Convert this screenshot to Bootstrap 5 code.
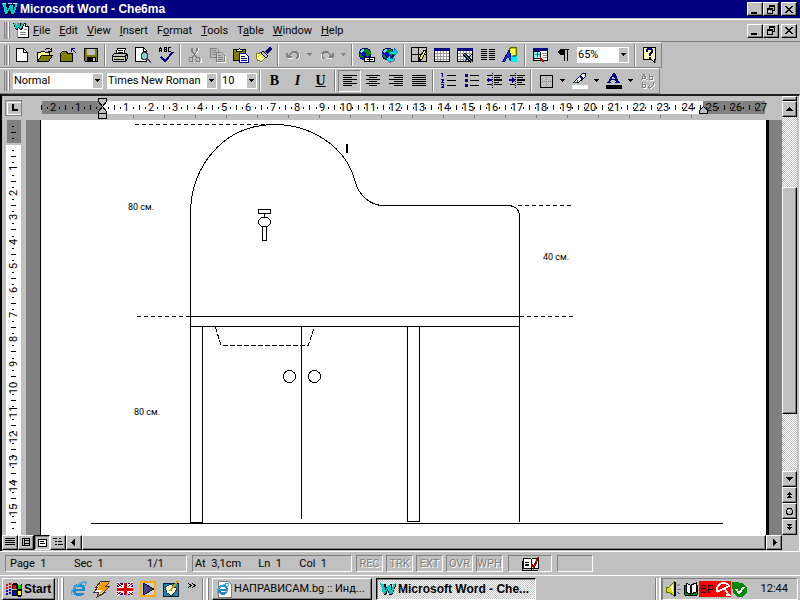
<!DOCTYPE html>
<html lang="en">
<head>
<meta charset="utf-8">
<meta name="viewport" content="width=device-width, initial-scale=1">
<title>Microsoft Word - Che6ma</title>
<link href="https://cdn.jsdelivr.net/npm/bootstrap@5.3.0/dist/css/bootstrap.min.css" rel="stylesheet">
<style>
:root{--face:#c0c0c0;--shade:#808080;--navy:#000080}
body{background:var(--face);color:#000;font:11px/14px Roboto,"Liberation Sans",sans-serif;overflow-x:hidden}
button{font:inherit;color:#000;border-radius:0}
svg{display:block;flex:none;shape-rendering:crispEdges}
.bold-ui,.task.bold-ui{font:bold 12px/16px "Liberation Sans",Arial,sans-serif}
.titlebar{background:var(--navy);color:#fff;height:18px;padding:0 3px 0 2px;margin-bottom:1px}
.titlebar h1{padding-left:2px}
.raised{background:var(--face);border:1px solid;border-color:#fff #000 #000 #fff;box-shadow:inset -1px -1px var(--shade);padding:0}
.sunken{border:1px solid;border-color:var(--shade) #fff #fff var(--shade)}
.dither{background:repeating-conic-gradient(#fff 0 25%,#c0c0c0 0 50%) 0 0/2px 2px}
.win-btn{width:16px;height:14px;display:flex;align-items:center;justify-content:center}
.win-btn.restore{margin-right:2px}
.band{border-top:1px solid #fff;border-bottom:1px solid var(--shade);border-right:1px solid var(--shade);padding-left:4px}
.menu-band{height:23px;padding-right:3px;border-right:0}
.tool-band{height:26px;width:fit-content}
.grip{width:6px;align-self:stretch;margin:2px 0;border:solid;border-width:0 1px;border-color:#fff var(--shade);background:linear-gradient(90deg,#c0c0c0 0 1px,#808080 1px 2px,#c0c0c0 2px 3px,#fff 3px 4px)}
.doc-icon{margin-left:3px}
.menu-item{border:0;background:none;padding:0 5px 0 4px;line-height:16px}
.tool{width:23px;height:22px;border:1px solid transparent;background:none;padding:0;display:flex;align-items:center;justify-content:center}
.tool.pressed{border-color:var(--shade) #fff #fff var(--shade)}
.drop{width:11px;height:22px;border:0;background:none;padding:0;display:flex;align-items:center;justify-content:center}
.divide{width:6px;align-self:stretch;margin:1px 0;background:linear-gradient(90deg,transparent 0 2px,#808080 2px 3px,#fff 3px 4px,transparent 4px)}
.combos{margin-left:3px}
.zoom-box{margin:0 3px}
.combo{background:#fff;border:1px solid #fff;height:16px}
.combo select{appearance:none;border:0;background:#fff;color:#000;font:inherit;padding:0;min-width:0;flex:1;line-height:14px;border-radius:0}
.combo-arrow{width:9px;background:var(--face);pointer-events:none;display:flex;align-items:center;justify-content:center}
.w90{width:90px}.w110{width:110px}.w36{width:36px}.w52{width:52px}.w44{width:44px}
.glyph{font:bold 14px/16px "Liberation Serif",serif}
.workspace{border-top:2px solid #000;border-top-color:#202020;border-left:2px solid #000;border-right:1px solid #fff;padding-right:2px}
.h-ruler{height:24px;overflow:hidden}
.doc-area{background:var(--shade);padding:0 13px 0 14px;min-width:0}
.sheet{background:#fff;border-left:1px solid #000;border-right:3px solid #000;overflow:hidden;width:100%}
.v-ruler{width:24px;overflow:hidden}
.v-scroll{width:15px}
.v-scroll .raised,.h-scroll .raised{display:flex;align-items:center;justify-content:center}
.v-scroll .step{height:16px;width:15px;flex:none}
.split-box{height:5px;flex:none}
.v-thumb{flex:227}
.space-above{flex:70}.space-below{flex:57}
.h-scroll{height:16px}
.view-btn{width:16px;height:15px}
.view-btn.active{border-color:#000 #fff #fff #000;box-shadow:inset 1px 1px var(--shade)}
.h-thumb{height:15px}
.status{height:24px;border-top:1px solid #fff;padding:3px 5px}
.status .sunken{height:17px;line-height:15px;white-space:nowrap}
.pane-a{width:182px;padding:0 22px 0 4px}.pane-b{width:160px;padding:0 24px 0 2px}
.pane-gap{margin-left:5px}
.modes{gap:3px;margin-left:4px}
.mode{width:27px;color:var(--shade);text-shadow:1px 1px #fff;text-align:center}
.taskbar{border-top:1px solid #fff;height:27px;padding:2px}
.start{width:53px;height:22px;padding:0 2px;gap:1px}
.quick{width:23px;height:22px;border:0;background:none;padding:0;display:flex;align-items:center;justify-content:center}
.quick.more{width:18px}
.task{width:160px;height:22px;padding:0 3px;gap:2px;text-align:left;white-space:nowrap;overflow:hidden}
.task.current{border-color:#000 #fff #fff #000;box-shadow:inset 1px 1px var(--shade)}
.tray{width:136px;height:22px;padding:0 9px 0 2px}
.bar-grip{width:7px;height:22px;margin:0 3px 0 2px;background:linear-gradient(90deg,#808080 0 1px,#fff 1px 2px,transparent 2px 4px,#fff 4px 6px,#808080 6px)}
.tick-label{font:11px Roboto,"Liberation Sans",sans-serif;text-anchor:middle}
.dim-label{font:9px Roboto,"Liberation Sans",sans-serif}
</style>
<script src="https://cdn.jsdelivr.net/npm/bootstrap@5.3.0/dist/js/bootstrap.bundle.min.js"></script>
</head>
<body class="d-flex flex-column min-vh-100">

<svg width="0" height="0" class="position-absolute" aria-hidden="true">
<symbol id="word" viewBox="0 0 16 14"><path d="M1 2h5l1 5 3-5h2v5l2-5V1h2v3l-4 9H9L8 8l-2 5H4L2 4H1z" fill="#000"/><path d="M0 1h4l1 8 3-6h3v6l3-8h2l-4 11H9L8 6l-3 6H3L1 3H0z" fill="#0cc"/><path d="M1 1h3M6 1h4M11 1h4" stroke="#aff"/></symbol>
<symbol id="min" viewBox="0 0 10 9"><path d="M1 7h6v2H1z"/></symbol>
<symbol id="restore" viewBox="0 0 10 9"><path d="M3 0h6v6H7V5h1V2H4v1H3zM1 3h6v6H1zm1 2v3h4V5z" fill-rule="evenodd"/></symbol>
<symbol id="close" viewBox="0 0 10 9"><path d="M1 1h2v1h1v1h2V2h1V1h2v1H8v1H7v1H6v1h1v1h1v1h1v1H7V7H6V6H4v1H3v1H1V7h1V6h1V5h1V4H3V3H2V2H1z"/></symbol>
<symbol id="down" viewBox="0 0 7 4"><path d="M1 0h5v1H5v1H4v1H3V2H2V1H1z"/></symbol>
<symbol id="doc" viewBox="0 0 16 17"><path d="M4.500 1.500h8l3 3v11h-11z" fill="#fff" stroke="#808080"/><path d="M15.500 4v11.500H5M12.500 1v3.500h3" stroke="#000" fill="none"/><path d="M7 10.500h6M7 12.500h6M11 7.500h3" stroke="#808080"/><path d="M0 1h3l1 4 2-4h2v4l2-4h2L9 8H7L6 5 5 8H3z" fill="#000"/><path d="M0 1h3l1 3 2-3h1v4l2-4h2L8 7H7L6 4 4 7H3L1 2z" fill="#0cc"/></symbol>
<symbol id="new" viewBox="0 0 18 16"><path d="M3.500 1.500h7l4 4v9h-11z" fill="#fff" stroke="#000"/><path d="M10.500 1.500v4h4" fill="none" stroke="#000"/></symbol>
<symbol id="open" viewBox="0 0 18 16"><path d="M1.500 14V5.500h3l1-1h3l1 1h4v3" fill="#ff8" stroke="#000"/><path d="M1.500 14.500l4-6h11l-4 6z" fill="#808000" stroke="#000"/><path d="M9 3q3-3 6 0M15.500 1v3H12" fill="none" stroke="#000"/></symbol>
<symbol id="shut" viewBox="0 0 18 16"><path d="M1.500 14.500V6.500l2-2h4l1 2h5v8z" fill="#808000" stroke="#000"/><path d="M12.500 5V1.500H16M13 2l4 4" fill="none" stroke="#000080"/></symbol>
<symbol id="save" viewBox="0 0 18 16"><path d="M2.500 1.500h13v13h-12l-1-1z" fill="#808000" stroke="#000"/><path d="M5 2h8v6H5z" fill="#c0c0c0"/><path d="M5 10h9v5H5z"/><path d="M11 11h2v3h-2z" fill="#c0c0c0"/></symbol>
<symbol id="print" viewBox="0 0 18 16"><path d="M4.500 7.500l2-6h8l-2 6" fill="#fff" stroke="#000"/><path d="M7 3.500h5M7 5.500h5" stroke="#000"/><path d="M1.500 8.500l2-2h12l1 1v4l-2 3h-12l-1-1z" fill="#c0c0c0" stroke="#000"/><path d="M2 9.500h12M3 12.500h10M14 9l3-2M14 9v5" fill="none" stroke="#000"/><path d="M9 11h2v1H9z" fill="#ff0"/></symbol>
<symbol id="preview" viewBox="0 0 18 16"><path d="M1.500.500h8l3 3v11h-11z" fill="#fff" stroke="#000"/><path d="M9.500 1v3h3" fill="none" stroke="#000"/><circle cx="10.500" cy="9" r="3.500" fill="#8cc" stroke="#404040"/><path d="M13 11.500l4 4" stroke="#446" stroke-width="2"/></symbol>
<symbol id="spell" viewBox="0 0 18 16"><path d="M2.500 5V2l1-1 1 1v3M3 3.500h2M7.500 5V.500h2v4h-2M7 2.500h2M14 .500h-2.500v4H14" fill="none" stroke="#000"/><path d="M4 10l4 4 8-9" fill="none" stroke="#000080" stroke-width="2"/></symbol>
<symbol id="cut" viewBox="0 0 18 16"><path d="M6 1v3l5 7M11 1v3l-5 7" stroke="#808080" fill="none" stroke-width="1.500"/><circle cx="5" cy="12.500" r="2" fill="none" stroke="#808080"/><circle cx="12" cy="12.500" r="2" fill="none" stroke="#808080"/><path d="M12 1v3l-2 3M14 15h1v-3" stroke="#fff" fill="none"/></symbol>
<symbol id="copy" viewBox="0 0 18 16"><path d="M1.500 1.500h6l2 2v7h-8z" fill="#c0c0c0" stroke="#808080"/><path d="M7.500 5.500h5l3 3v6h-8z" fill="#c0c0c0" stroke="#808080"/><path d="M3 3.500h4M3 5.500h4M3 7.500h4M9 8.500h3M9 10.500h5M9 12.500h5" stroke="#808080"/><path d="M16.500 9v6.500H8" stroke="#fff" fill="none"/></symbol>
<symbol id="paste" viewBox="0 0 18 16"><path d="M1.500 2.500h12v11h-12z" fill="#808000" stroke="#000"/><path d="M4.500 4.500v-2h2l1-1 1 1h2v2z" fill="#ff8" stroke="#000"/><path d="M7.500 6.500h6l3 3v6h-9z" fill="#fff" stroke="#000080"/><path d="M9 9.500h4M9 11.500h6M9 13.500h6" stroke="#000080"/></symbol>
<symbol id="painter" viewBox="0 0 18 16"><path d="M1 7l7-2 4 4-6 6-2-2-1 1-1-2z" fill="#ffc" stroke="#808000"/><path d="M3 10l4-3M5 12l4-3" stroke="#dd0"/><path d="M8 4l5 5-2 2-5-5z" fill="#c0c0c0" stroke="#000"/><path d="M11 6l5-5" stroke="#000080" stroke-width="3"/></symbol>
<symbol id="undo" viewBox="0 0 18 16"><path d="M4 10q-2-1-1-4M3.500 6v4h4M4 9l5-4h3l2 2v3l-2 2" fill="none" stroke="#808080" stroke-width="1.500"/><path d="M4 11.500h5M13 13l2-2V7" fill="none" stroke="#fff"/></symbol>
<symbol id="globe" viewBox="0 0 18 16"><circle cx="7" cy="7" r="6.500" fill="#008"/><circle cx="7" cy="7" r="5.500" fill="#00c"/><path d="M5 2h5l3 4-3 4-2-1V6L5 5zM1 7l3 1 2 4-3-1z" fill="#080"/><path d="M2 4l2-2h2v2L3 6z" fill="#8df"/></symbol>
<symbol id="hyper" viewBox="0 0 18 16"><use href="#globe" width="18" height="16"/><path d="M6.500 10.500h5v4h-5zM11.500 10.500h5v4h-5zM9 12.500h6" fill="#fff" stroke="#000"/></symbol>
<symbol id="web" viewBox="0 0 18 16"><use href="#globe" width="18" height="16"/><path d="M8 4h5V1l4 4-4 4V7H8zM13 11H9V8l-4 4 4 4v-2h4z" fill="#0dd" stroke="#046" stroke-width=".5"/></symbol>
<symbol id="borders" viewBox="0 0 18 16"><path d="M1.500.500h15v14h-15zM8.500.500v14M1.500 7.500h15" fill="none" stroke="#000"/><path d="M9 14l1-4 4-7 2 1-4 8z" fill="#ff0" stroke="#000"/></symbol>
<symbol id="grid" viewBox="0 0 18 16"><path d="M1.500 1.500h15v13h-15z" fill="#fff" stroke="#000"/><path d="M1 1h16v3H1z" fill="#000080"/><path d="M2 6.500h14M2 9.500h14M2 12.500h14M4.500 4v10M7.500 4v10M10.500 4v10M13.500 4v10" stroke="#999"/></symbol>
<symbol id="excel" viewBox="0 0 18 16"><use href="#grid" width="18" height="16"/><path d="M8 7l8 8" stroke="#000" stroke-width="3"/><path d="M8 7l8 8" stroke="#0cc"/><path d="M16 7l-8 8" stroke="#008"/></symbol>
<symbol id="columns" viewBox="0 0 18 16"><path d="M2 2.500h6M10 2.500h6M2 4.500h6M10 4.500h6M2 6.500h6M10 6.500h6M2 8.500h6M10 8.500h6M2 10.500h6M10 10.500h6M2 12.500h6M10 12.500h6" stroke="#000"/></symbol>
<symbol id="draw" viewBox="0 0 18 16"><path d="M7.500 1.500l2-1h5v8l-2 1h-5z" fill="#cc0" stroke="#660"/><path d="M8 2h5v6H8z" fill="#ff4"/><path d="M1 14L7 3l3 10H8l-2-4-3 5z" fill="#04c" stroke="#008"/><circle cx="12" cy="12" r="3.500" fill="#0ee"/><path d="M10 10l2-3 2 3z" fill="#08a"/></symbol>
<symbol id="map" viewBox="0 0 18 16"><path d="M2.500 1.500h14v12h-14z" fill="#fff" stroke="#000"/><path d="M2 1h15v3H2z" fill="#000080"/><path d="M11 6.500h5M12 8.500h4M12 10.500h4" stroke="#888"/><circle cx="6" cy="8" r="4" fill="#8ee" stroke="#000"/><path d="M4 7.500h5M6.500 5v5" stroke="#088"/><path d="M9 11l4 4" stroke="#c00" stroke-width="2"/></symbol>
<symbol id="pilcrow" viewBox="0 0 18 16"><path d="M6 2h9v1h-1v11h-1V3h-2v11h-1V8H7L5 7 4 6V4l1-1z"/></symbol>
<symbol id="help" viewBox="0 0 18 16"><path d="M4 13h9v3h2V3h-1" fill="#808080"/><path d="M2.500.500h12v12h-1v3l-3-3h-8z" fill="#ffa" stroke="#000"/><path d="M6 4.500V3l1-1h3l1 1v2L8.500 7v2M7.500 11h2" fill="none" stroke="#000080" stroke-width="2"/></symbol>
<symbol id="al" viewBox="0 0 16 14"><path d="M1 1.500h14M1 3.500h9M1 5.500h14M1 7.500h9M1 9.500h14M1 11.500h9" stroke="#000"/></symbol>
<symbol id="ac" viewBox="0 0 16 14"><path d="M1 1.500h14M4 3.500h8M1 5.500h14M4 7.500h8M1 9.500h14M4 11.500h8" stroke="#000"/></symbol>
<symbol id="ar" viewBox="0 0 16 14"><path d="M1 1.500h14M6 3.500h9M1 5.500h14M6 7.500h9M1 9.500h14M6 11.500h9" stroke="#000"/></symbol>
<symbol id="aj" viewBox="0 0 16 14"><path d="M1 1.500h14M1 3.500h14M1 5.500h14M1 7.500h14M1 9.500h14M1 11.500h14" stroke="#000"/></symbol>
<symbol id="num" viewBox="0 0 16 16"><path d="M7 2.500h9M7 7.500h9M7 12.500h9" stroke="#000"/><path d="M1 .500h1.500V4M1 6.500h2v1L1.500 9.500H4M1 11.500h2.500v3H1M1.500 13h2" fill="none" stroke="#000080"/></symbol>
<symbol id="bul" viewBox="0 0 16 16"><path d="M7 2.500h9M7 7.500h9M7 12.500h9" stroke="#000"/><path d="M2 1h3v3H2zM2 6h3v3H2zM2 11h3v3H2z" fill="#000080"/></symbol>
<symbol id="outd" viewBox="0 0 16 16"><path d="M1 2.500h5M8 2.500h8M8 4.500h6M8 9.500h5M1 11.500h5M8 11.500h8" stroke="#000"/><path d="M8 6h8v2H8z"/><path d="M0 7l3-3v2h3v2H3v2z" fill="#000080"/><path d="M6.500 0v15" stroke="#000" stroke-dasharray="1 1"/></symbol>
<symbol id="ind" viewBox="0 0 16 16"><path d="M1 2.500h5M8 2.500h8M8 4.500h6M8 9.500h5M1 11.500h5M8 11.500h8" stroke="#000"/><path d="M8 6h8v2H8z"/><path d="M6 7L3 4v2H0v2h3v2z" fill="#000080"/><path d="M6.500 0v15" stroke="#000" stroke-dasharray="1 1"/></symbol>
<symbol id="box" viewBox="0 0 16 16"><path d="M2.500 2.500h12v12h-12z" fill="none" stroke="#000"/><path d="M8.500 4v10M4 8.500h10" stroke="#808080" stroke-dasharray="1 1"/></symbol>
<symbol id="hilite" viewBox="0 0 16 16"><path d="M2 9l3-3 6-6h3l-1 4-6 5z" fill="#fff" stroke="#000"/><path d="M8 3l3 3" stroke="#00c" stroke-width="2"/><path d="M2 9h3l1-2" stroke="#066" fill="none"/><path d="M0 12h16v4H0z" fill="#fff"/></symbol>
<symbol id="ink" viewBox="0 0 16 16"><path d="M7 0h2l4 9h1v1H9V9h1L9 7H5L4 9h1v1H1V9h1zM7 3L6 6h3z" fill="#000080" fill-rule="evenodd"/><path d="M0 12h16v4H0z"/></symbol>
<symbol id="turn" viewBox="0 0 16 16"><g fill="none" stroke="#fff" transform="translate(1 1)"><path d="M1.500 7L4 1l2.500 6M2 5h4M9.500 1v5.500h3v-3h-3M2.500 9v5.500h3v-3h-3M13 9v3l-2 2H8M10 12l-2 2 2 2"/></g><path d="M1.500 7L4 1l2.500 6M2 5h4M9.500 1v5.500h3v-3h-3M2.500 9v5.500h3v-3h-3M13 9v3l-2 2H8M10 12l-2 2 2 2" fill="none" stroke="#808080"/></symbol>
<symbol id="ie" viewBox="0 0 18 18"><ellipse cx="9" cy="10" rx="5" ry="5" fill="none" stroke="#28c" stroke-width="3"/><path d="M5 10h8" stroke="#28c" stroke-width="2"/><path d="M12 11h4v2h-4z" fill="#c0c0c0"/><path d="M2 15Q0 10 8 5q7-5 8-2 0 1-1 3" fill="none" stroke="#4ae" stroke-width="1.500"/></symbol>
<symbol id="flag-win" viewBox="0 0 18 15"><path d="M7 2l2-1h3v6H7zM12 2l2 1 3-1v6l-3 1-2-1zM7 8h4l1 1v5H7zM12 8l3 1 2-1v6l-3 1-2-1z"/><path d="M8 3h3v4H8z" fill="#f00"/><path d="M13 3h3v4h-3z" fill="#0c0"/><path d="M8 9h3v4H8z" fill="#00f"/><path d="M13 9h3v4h-3z" fill="#ff0"/><path d="M1 3h2M4 2h2M1 6h2M4 5h2" stroke="#f00" stroke-width="2"/><path d="M1 9h2M4 8h2M1 12h2M4 11h2" stroke="#00f" stroke-width="2"/></symbol>
<symbol id="bolt" viewBox="0 0 18 18"><path d="M8 1h9l-4 5h4l-6 6h2L4 17l2-5H1l4-5H3z" fill="#fff" stroke="#333"/><path d="M8 2h8l-5 5h5L5 16l4-6H3l4-3H5z" fill="#f90"/></symbol>
<symbol id="uk" viewBox="0 0 18 18"><path d="M1 3h16v12H1z" fill="#008"/><path d="M1 3l16 12M17 3L1 15" stroke="#fff" stroke-width="3"/><path d="M1 3l16 12M17 3L1 15" stroke="#d00"/><path d="M9 3v12M1 9h16" stroke="#fff" stroke-width="5"/><path d="M9 3v12M1 9h16" stroke="#d00" stroke-width="3"/></symbol>
<symbol id="play" viewBox="0 0 18 18"><path d="M1 1h16v16H1z" fill="#fa0"/><path d="M3 3h12v12H3z" fill="#ccd"/><path d="M4 3l11 6-11 6z" fill="#448" stroke="#113"/></symbol>
<symbol id="desk" viewBox="0 0 18 18"><path d="M1.500 3.500h15v13h-15z" fill="#28a" stroke="#024"/><path d="M3 7l6-3 6 5-5 7-5-3z" fill="#ffd" stroke="#333"/><path d="M8 11l8-10" stroke="#c90" stroke-width="2"/></symbol>
<symbol id="proof" viewBox="0 0 19 17"><path d="M2.500 2.500h6l2 1 2-1h5v11h-6l-1 1-1-1h-7z" fill="#fff" stroke="#000"/><path d="M10.500 3v11M1 5v10.500h16M4 6.500h4M4 8.500h4M4 10.500h4" fill="none" stroke="#000"/><path d="M10 8l3 4 5-11" fill="none" stroke="#a00" stroke-width="2"/></symbol>
<symbol id="sound" viewBox="0 0 18 18"><path d="M1 7h3l5-5v14l-5-4H1z" fill="#dd0" stroke="#660"/><path d="M5 7l3-3v9z" fill="#ffc"/><path d="M10 2v14" stroke="#000" stroke-width="2"/><path d="M12 6l3-2M12 9.500h4M12 12l3 2" stroke="#808080"/></symbol>
<symbol id="book" viewBox="0 0 16 18"><path d="M1 5l1 10h12l1-10" fill="#080" stroke="#000"/><path d="M3 3l4 2v9l-4-2zM13 3L8 5v9l5-2z" fill="#fff" stroke="#000"/></symbol>
<symbol id="umb" viewBox="0 0 16 16"><path d="M0 0h16v16H0z" fill="#f00"/><path d="M2 11Q1 3 8 2q5 0 6 3l-12 6M9 7l5 7h-3" fill="none" stroke="#fff" stroke-width="2"/></symbol>
<symbol id="ok" viewBox="0 0 17 17"><circle cx="9" cy="9" r="7" fill="#080"/><path d="M1 1h7v7H1z" fill="#080"/><path d="M5 8l3 4 5-6" fill="none" stroke="#fff" stroke-width="2"/></symbol>
</svg>

<header class="titlebar d-flex align-items-center">
  <svg width="16" height="14"><use href="#word"/></svg>
  <h1 class="bold-ui m-0 flex-grow-1">Microsoft Word - Che6ma</h1>
  <button class="raised win-btn" aria-label="Minimize"><svg width="10" height="9"><use href="#min"/></svg></button>
  <button class="raised win-btn restore" aria-label="Restore"><svg width="10" height="9"><use href="#restore"/></svg></button>
  <button class="raised win-btn" aria-label="Close"><svg width="10" height="9"><use href="#close"/></svg></button>
</header>

<nav class="band menu-band d-flex align-items-center" aria-label="Menu">
  <span class="grip"></span>
  <svg width="16" height="17" class="doc-icon"><use href="#doc"/></svg>
  <button class="menu-item"><u>F</u>ile</button><button class="menu-item"><u>E</u>dit</button><button class="menu-item"><u>V</u>iew</button><button class="menu-item"><u>I</u>nsert</button><button class="menu-item">F<u>o</u>rmat</button><button class="menu-item"><u>T</u>ools</button><button class="menu-item">T<u>a</u>ble</button><button class="menu-item"><u>W</u>indow</button><button class="menu-item"><u>H</u>elp</button>
  <button class="raised win-btn ms-auto" aria-label="Minimize document"><svg width="10" height="9"><use href="#min"/></svg></button>
  <button class="raised win-btn restore" aria-label="Restore document"><svg width="10" height="9"><use href="#restore"/></svg></button>
  <button class="raised win-btn" aria-label="Close document"><svg width="10" height="9"><use href="#close"/></svg></button>
</nav>

<div class="band tool-band d-flex align-items-center" role="toolbar" aria-label="Standard">
  <span class="grip"></span>
  <button class="tool" aria-label="New"><svg width="18" height="16"><use href="#new"/></svg></button>
  <button class="tool" aria-label="Open"><svg width="18" height="16"><use href="#open"/></svg></button>
  <button class="tool" aria-label="Close file"><svg width="18" height="16"><use href="#shut"/></svg></button>
  <button class="tool" aria-label="Save"><svg width="18" height="16"><use href="#save"/></svg></button>
  <span class="divide"></span>
  <button class="tool" aria-label="Print"><svg width="18" height="16"><use href="#print"/></svg></button>
  <button class="tool" aria-label="Print preview"><svg width="18" height="16"><use href="#preview"/></svg></button>
  <button class="tool" aria-label="Spelling"><svg width="18" height="16"><use href="#spell"/></svg></button>
  <span class="divide"></span>
  <button class="tool" aria-label="Cut"><svg width="18" height="16"><use href="#cut"/></svg></button>
  <button class="tool" aria-label="Copy"><svg width="18" height="16"><use href="#copy"/></svg></button>
  <button class="tool" aria-label="Paste"><svg width="18" height="16"><use href="#paste"/></svg></button>
  <button class="tool" aria-label="Format painter"><svg width="18" height="16"><use href="#painter"/></svg></button>
  <span class="divide"></span>
  <button class="tool" aria-label="Undo"><svg width="18" height="16"><use href="#undo"/></svg></button>
  <button class="drop" aria-label="Undo list"><svg width="7" height="4" fill="#808080"><use href="#down"/></svg></button>
  <button class="tool" aria-label="Redo"><svg width="18" height="16" viewBox="0 0 18 16"><g transform="matrix(-1 0 0 1 18 0)"><use href="#undo" width="18" height="16"/></g></svg></button>
  <button class="drop" aria-label="Redo list"><svg width="7" height="4" fill="#808080"><use href="#down"/></svg></button>
  <span class="divide"></span>
  <button class="tool" aria-label="Insert hyperlink"><svg width="18" height="16"><use href="#hyper"/></svg></button>
  <button class="tool" aria-label="Web toolbar"><svg width="18" height="16"><use href="#web"/></svg></button>
  <span class="divide"></span>
  <button class="tool" aria-label="Tables and borders"><svg width="18" height="16"><use href="#borders"/></svg></button>
  <button class="tool" aria-label="Insert table"><svg width="18" height="16"><use href="#grid"/></svg></button>
  <button class="tool" aria-label="Insert worksheet"><svg width="18" height="16"><use href="#excel"/></svg></button>
  <button class="tool" aria-label="Columns"><svg width="18" height="16"><use href="#columns"/></svg></button>
  <button class="tool" aria-label="Drawing"><svg width="18" height="16"><use href="#draw"/></svg></button>
  <span class="divide"></span>
  <button class="tool" aria-label="Document map"><svg width="18" height="16"><use href="#map"/></svg></button>
  <button class="tool" aria-label="Show marks"><svg width="18" height="16"><use href="#pilcrow"/></svg></button>
  <div class="combo zoom-box w52 d-flex"><select aria-label="Zoom"><option>65%</option></select><span class="combo-arrow"><svg width="7" height="4"><use href="#down"/></svg></span></div>
  <span class="divide"></span>
  <button class="tool" aria-label="Help"><svg width="18" height="16"><use href="#help"/></svg></button>
</div>

<div class="band tool-band d-flex align-items-center" role="toolbar" aria-label="Formatting">
  <span class="grip"></span>
  <div class="combos d-flex gap-1">
    <div class="combo w90 d-flex"><select aria-label="Style"><option>Normal</option></select><span class="combo-arrow"><svg width="7" height="4"><use href="#down"/></svg></span></div>
    <div class="combo w110 d-flex"><select aria-label="Font"><option>Times New Roman</option></select><span class="combo-arrow"><svg width="7" height="4"><use href="#down"/></svg></span></div>
    <div class="combo w36 d-flex"><select aria-label="Font size"><option>10</option></select><span class="combo-arrow"><svg width="7" height="4"><use href="#down"/></svg></span></div>
  </div>
  <span class="divide"></span>
  <button class="tool glyph" aria-label="Bold">B</button>
  <button class="tool glyph fst-italic" aria-label="Italic">I</button>
  <button class="tool glyph text-decoration-underline" aria-label="Underline">U</button>
  <span class="divide"></span>
  <button class="tool pressed dither" aria-label="Align left"><svg width="16" height="14"><use href="#al"/></svg></button>
  <button class="tool" aria-label="Center"><svg width="16" height="14"><use href="#ac"/></svg></button>
  <button class="tool" aria-label="Align right"><svg width="16" height="14"><use href="#ar"/></svg></button>
  <button class="tool" aria-label="Justify"><svg width="16" height="14"><use href="#aj"/></svg></button>
  <span class="divide"></span>
  <button class="tool" aria-label="Numbering"><svg width="16" height="16"><use href="#num"/></svg></button>
  <button class="tool" aria-label="Bullets"><svg width="16" height="16"><use href="#bul"/></svg></button>
  <button class="tool" aria-label="Decrease indent"><svg width="16" height="16"><use href="#outd"/></svg></button>
  <button class="tool" aria-label="Increase indent"><svg width="16" height="16"><use href="#ind"/></svg></button>
  <span class="divide"></span>
  <button class="tool" aria-label="Border"><svg width="16" height="16"><use href="#box"/></svg></button>
  <button class="drop" aria-label="Border list"><svg width="7" height="4"><use href="#down"/></svg></button>
  <button class="tool" aria-label="Highlight"><svg width="16" height="16"><use href="#hilite"/></svg></button>
  <button class="drop" aria-label="Highlight list"><svg width="7" height="4"><use href="#down"/></svg></button>
  <button class="tool" aria-label="Font color"><svg width="16" height="16"><use href="#ink"/></svg></button>
  <button class="drop" aria-label="Font color list"><svg width="7" height="4"><use href="#down"/></svg></button>
  <button class="tool" aria-label="Text direction"><svg width="16" height="16"><use href="#turn"/></svg></button>
</div>

<main class="workspace d-flex flex-grow-1">
  <div class="d-flex flex-column flex-grow-1 overflow-hidden">
    <div class="h-ruler">
      <svg width="780" height="24" viewBox="2 96 780 24" id="hr" role="img" aria-label="Horizontal ruler">
        <path d="M5.500 115.500v-15h16" stroke="#808080" fill="none"/><path d="M7 114V102h14v12z" fill="none" stroke="#fff"/><path d="M21.500 100v15H5" stroke="#808080" fill="none"/>
        <path d="M12 104h2v5h4v2h-6z"/>
        <path d="M42 101h60v13H42zM703 101h62v13h-62z" fill="#808080"/><path d="M102 101h601v13H102z" fill="#fff"/>
      </svg>
    </div>
    <div class="d-flex flex-grow-1">
      <div class="v-ruler"><svg width="24" height="415" viewBox="2 120 24 415" id="vr" role="img" aria-label="Vertical ruler">
        <path d="M7 120h14v23H7z" fill="#808080"/><path d="M6 145h15v390H6z" fill="#fff"/></svg></div>
      <div class="doc-area d-flex flex-grow-1">
        <div class="sheet">
          <svg width="725" height="415" viewBox="41 120 725 415" fill="none" stroke="#000" role="img" aria-label="Cabinet drawing">
            <path d="M190.500 522V213C191 168 222 124.500 275 124.500C310 124.500 346 146 355 181C358 193 368 205.500 384 205.500H508Q519.500 206 519.500 217V522"/>
            <path d="M190 316.500h330M190 326.500h330M91 523.500h632M301.500 326v193"/>
            <path d="M190.500 326.500h12v196h-12zM407.500 326.500h12v195h-12z"/>
            <path d="M135 124.500h136M518 205.500h54M137 316.500h53M520 316.500h53" stroke-dasharray="4 3"/>
            <path d="M215.500 327L221 345.500H308L314.500 327" stroke-dasharray="5 2"/>
            <circle cx="289.500" cy="376.500" r="6"/><circle cx="314.500" cy="376.500" r="6"/>
            <path d="M258.500 209.500h12v4h-12zM264.500 214v3M262.500 226.500h4v14h-4zM261.500 217.500h6l3 3v3l-3 3h-6l-3-3v-3z"/>
            <path d="M347 144v9" stroke-width="2"/>
            <g fill="#000" stroke="none" class="dim-label"><text x="128" y="210">80 см.</text><text x="543" y="260">40 см.</text><text x="134" y="415">80 см.</text></g>
          </svg>
        </div>
      </div>
    </div>
    <div class="h-scroll d-flex">
      <button class="raised view-btn" aria-label="Normal view"><svg width="10" height="9"><path d="M0 .500h10M0 2.500h10M0 4.500h10M0 6.500h10" stroke="#000"/></svg></button>
      <button class="raised view-btn" aria-label="Online layout view"><svg width="10" height="9"><path d="M1.500.500h7v7h-7zM3.500 1v6M4 2.500h4M4 5.500h4" stroke="#000" fill="none"/></svg></button>
      <button class="raised view-btn active" aria-label="Page layout view"><svg width="10" height="9"><path d="M1.500 1.500h8v7h-8z" stroke="#000" fill="#fff"/><path d="M3 3.500h4M3 5.500h5" stroke="#000"/></svg></button>
      <button class="raised view-btn" aria-label="Outline view"><svg width="10" height="9"><path d="M0 .500h4M6 .500h2M2 3.500h2M5 3.500h4M2 6.500h2M5 6.500h5" stroke="#000"/></svg></button>
      <button class="raised view-btn" aria-label="Scroll left"><svg width="8" height="9"><path d="M5 0v9L1 4.500z"/></svg></button>
      <div class="raised h-thumb flex-grow-1"></div>
      <button class="raised view-btn" aria-label="Scroll right"><svg width="8" height="9"><path d="M3 0v9l4-4.500z"/></svg></button>
    </div>
  </div>
  <div class="v-scroll d-flex flex-column">
    <div class="raised split-box"></div>
    <button class="raised step" aria-label="Scroll up"><svg width="9" height="6"><path d="M4 1h1v1h1v1h1v1h1v1H1V4h1V3h1V2h1z"/></svg></button>
    <div class="dither space-above"></div>
    <div class="raised v-thumb"></div>
    <div class="dither space-below"></div>
    <button class="raised step" aria-label="Scroll down"><svg width="9" height="6"><path d="M1 1h7v1H7v1H6v1H5v1H4V4H3V3H2V2H1z"/></svg></button>
    <button class="raised step" aria-label="Previous page"><svg width="9" height="7"><path d="M4 0h1v1h1v1h1v1H5v1h1v1h1v1H2V5h1V4h1V3H2V2h1V1h1z"/></svg></button>
    <button class="raised step" aria-label="Select browse object"><svg width="9" height="9"><circle cx="4.500" cy="4.500" r="3" fill="#bbb" stroke="#000"/><path d="M3 3h2v1H3z" fill="#fff"/></svg></button>
    <button class="raised step" aria-label="Next page"><svg width="9" height="7"><path d="M2 0h5v1H6v1H5v1h2v1H6v1H5v1H4V5H3V4H2V3h2V2H3V1H2z"/></svg></button>
    <div class="step"></div>
  </div>
</main>

<div class="status d-flex" role="status">
  <div class="sunken pane-a d-flex justify-content-between"><span>Page&nbsp; 1</span><span>Sec&nbsp; 1</span><span class="ps-3">1/1</span></div>
  <div class="sunken pane-b pane-gap d-flex justify-content-between">
    <span>At&nbsp; 3,1cm</span><span>Ln&nbsp; 1</span><span>Col&nbsp; 1</span></div>
  <div class="modes d-flex">
    <div class="sunken mode">REC</div><div class="sunken mode">TRK</div><div class="sunken mode">EXT</div><div class="sunken mode">OVR</div><div class="sunken mode">WPH</div>
  </div>
  <div class="sunken w44 pane-gap d-flex justify-content-center"><svg width="19" height="16"><use href="#proof"/></svg></div>
  <div class="sunken w36 pane-gap"></div>
</div>

<footer class="taskbar d-flex align-items-center">
  <button class="raised start bold-ui d-flex align-items-center"><svg width="18" height="15"><use href="#flag-win"/></svg>Start</button>
  <span class="bar-grip"></span>
  <button class="quick" aria-label="Internet Explorer"><svg width="18" height="18"><use href="#ie"/></svg></button>
  <button class="quick" aria-label="Winamp"><svg width="18" height="18"><use href="#bolt"/></svg></button>
  <button class="quick" aria-label="Dictionary"><svg width="18" height="18"><use href="#uk"/></svg></button>
  <button class="quick" aria-label="Media player"><svg width="18" height="18"><use href="#play"/></svg></button>
  <button class="quick" aria-label="Show desktop"><svg width="18" height="18"><use href="#desk"/></svg></button>
  <button class="quick more" aria-label="More"><svg width="9" height="16"><path d="M1 2l3 2.500-3 2.500M5 2l3 2.500-3 2.500" fill="none" stroke="#000"/></svg></button>
  <span class="bar-grip"></span>
  <button class="raised task d-flex align-items-center me-1"><svg width="16" height="18"><path d="M2 1h10l3 3v13H2z" fill="#fff" stroke="#808080"/><use href="#ie" width="14" height="14" y="2"/></svg>НАПРАВИСАМ.bg :: Инд...</button>
  <button class="raised task current dither bold-ui d-flex align-items-center"><svg width="16" height="14"><use href="#word"/></svg><span>Microsoft Word - Che...</span></button>
  <span class="bar-grip ms-auto me-0"></span>
  <div class="sunken tray d-flex align-items-center">
    <svg width="18" height="18"><use href="#sound"/></svg><svg width="16" height="18"><use href="#book"/></svg>
    <svg width="16" height="16"><rect width="16" height="16" fill="#f00"/><text x="8" y="12" class="tick-label">BP</text></svg>
    <svg width="16" height="16"><use href="#umb"/></svg><svg width="17" height="17"><use href="#ok"/></svg>
    <time class="ms-auto">12:44</time>
  </div>
</footer>

<script>
const NS = 'http://www.w3.org/2000/svg';
function put(parent, tag, attrs, text) {
  const el = document.createElementNS(NS, tag);
  for (const k in attrs) el.setAttribute(k, attrs[k]);
  if (text !== undefined) el.textContent = text;
  parent.append(el);
}
// Quarter-unit marks: a number on whole units, a bar on halves, a dot on quarters.
const UNIT = 24.4;
const hr = document.getElementById('hr'), vr = document.getElementById('vr');
for (let q = -10; q <= 108; q++) {
  const x = Math.round(102 + q * UNIT / 4), n = Math.abs(q / 4);
  if (q === 0) continue;
  if (q % 4 === 0) put(hr, 'text', {x, y: 111, class: 'tick-label'}, n);
  else if (q % 2 === 0) put(hr, 'rect', {x, y: 105, width: 1, height: 5});
  else put(hr, 'rect', {x, y: 107, width: 1, height: 2});
}
for (let x = 133; x < 700; x += 31) put(hr, 'rect', {x, y: 115, width: 1, height: 3, fill: '#808080'});
put(hr, 'path', {d: 'M98.500 98.500h8v3l-4 5 4 5v7h-8v-7l4-5-4-5zM98 113.500h9', fill: '#c0c0c0', stroke: '#000'});
put(hr, 'path', {d: 'M699.500 113.500v-3l4-4 4 4v3z', fill: '#c0c0c0', stroke: '#000'});
for (let q = -3; q <= 63; q++) {
  const y = Math.round(144 + q * UNIT / 4);
  if (q === 0) continue;
  if (q % 4 === 0) put(vr, 'text', {x: 0, y: 0, transform: `translate(17 ${y}) rotate(-90)`, class: 'tick-label'}, q / 4);
  else if (q % 2 === 0) put(vr, 'rect', {x: 11, y, width: 5, height: 1});
  else put(vr, 'rect', {x: 12, y, width: 2, height: 1});
}
</script>
</body>
</html>
